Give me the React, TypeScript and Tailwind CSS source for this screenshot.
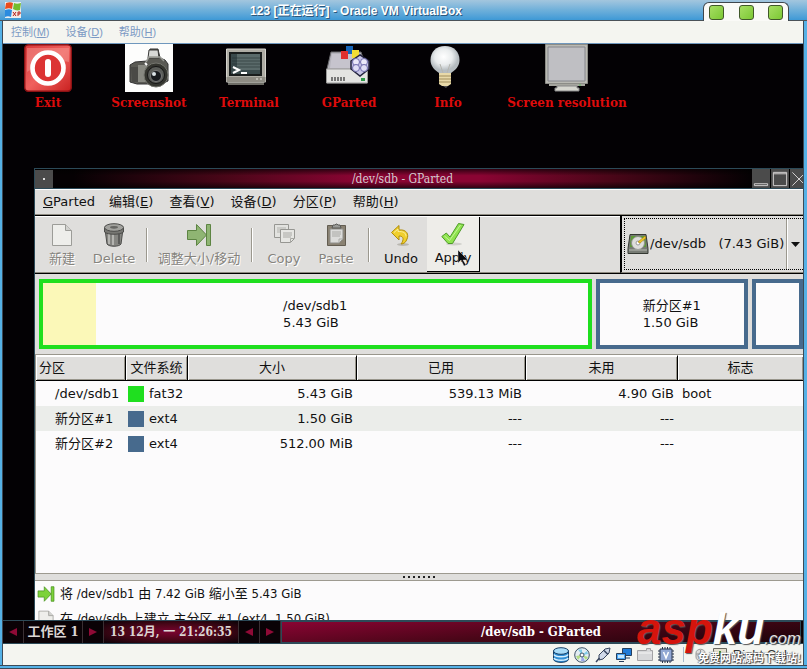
import type { ReactNode } from "react";

type Partition = {
  name: string;
  fs: string;
  swatch: string;
  border: string;
  gib: number;
  usedShare: number;
  size: string;
  used: string;
  unused: string;
  flags: string;
};

const partitions: Partition[] = [
  {
    name: "/dev/sdb1",
    fs: "fat32",
    swatch: "bg-[#1fdf1f]",
    border: "border-[#1fdf1f]",
    gib: 5.43,
    usedShare: 9.7,
    size: "5.43 GiB",
    used: "539.13 MiB",
    unused: "4.90 GiB",
    flags: "boot",
  },
  {
    name: "新分区#1",
    fs: "ext4",
    swatch: "bg-[#476a8d]",
    border: "border-[#476a8d]",
    gib: 1.5,
    usedShare: 0,
    size: "1.50 GiB",
    used: "---",
    unused: "---",
    flags: "",
  },
  {
    name: "新分区#2",
    fs: "ext4",
    swatch: "bg-[#476a8d]",
    border: "border-[#476a8d]",
    gib: 0.5,
    usedShare: 0,
    size: "512.00 MiB",
    used: "---",
    unused: "---",
    flags: "",
  },
];

const hostMenus = [
  { label: "控制", accessKey: "M" },
  { label: "设备", accessKey: "D" },
  { label: "帮助", accessKey: "H" },
];

const appMenus = [
  { label: "编辑", accessKey: "E" },
  { label: "查看", accessKey: "V" },
  { label: "设备", accessKey: "D" },
  { label: "分区", accessKey: "P" },
  { label: "帮助", accessKey: "H" },
];

const launchers = [
  { label: "Exit", icon: <ExitIcon />, width: "w-[90px]" },
  { label: "Screenshot", icon: <CameraIcon />, width: "w-[112px]" },
  { label: "Terminal", icon: <TerminalIcon />, width: "w-[88px]" },
  { label: "GParted", icon: <GPartedIcon />, width: "w-[112px]" },
  { label: "Info", icon: <BulbIcon />, width: "w-[86px]" },
  { label: "Screen resolution", icon: <MonitorIcon />, width: "w-[152px]" },
];

export default function App() {
  return (
    <div className="relative flex h-screen flex-col overflow-hidden bg-[#55b1e6] font-['DejaVu_Sans','Noto_Sans_CJK_SC',sans-serif] text-[13px] leading-4 text-[#111]">
      <HostTitleBar />
      <div className="ml-[2px] mr-[3px] flex min-h-0 flex-1 flex-col border-x border-[#3c4a57]">
        <HostMenuBar />
        <main className="flex min-h-0 flex-1 flex-col bg-[#030104]">
          <Launchers />
          <GPartedWindow />
          <Taskbar />
        </main>
        <StatusTray />
      </div>
      <div className="h-[4px] border-y border-[#3c4a57] bg-[#55b1e6]" />
      <Watermark />
    </div>
  );
}

function HostTitleBar() {
  return (
    <header className="flex h-[21px] shrink-0 items-end border-b border-[#4a5258] bg-linear-to-b from-[#a3c6de] via-[#6fb0da] to-[#3d99d6] pl-[5px] pr-[18px]">
      <div className="pb-[2px]">
        <XpIcon />
      </div>
      <h1 className="flex-1 pr-3 text-center font-['Liberation_Sans','Noto_Sans_CJK_SC',sans-serif] text-[12px] font-bold leading-[17px] text-white [text-shadow:1px_1px_0_#2b587d]">
        123 [正在运行] - Oracle VM VirtualBox
      </h1>
      <div className="-mb-px flex h-[19px] w-[86px] items-center justify-between rounded-t-md border border-b-0 border-[#3f474d] bg-[#fafaf7] px-[5px]">
        {["最小化", "最大化", "关闭"].map((label) => (
          <button
            key={label}
            type="button"
            aria-label={label}
            className="size-[15px] rounded-[3px] border border-[#41582a] bg-linear-to-br from-[#a6de62] to-[#7cc832]"
          />
        ))}
      </div>
    </header>
  );
}

function HostMenuBar() {
  return (
    <nav className="flex h-[23px] shrink-0 items-center gap-4 border-b border-[#6f97bd] bg-[#f4f5f0] pl-2 font-['Liberation_Sans','Noto_Sans_CJK_SC',sans-serif] text-[11px] text-[#7c9ac4]">
      {hostMenus.map((menu) => (
        <button key={menu.label} type="button">
          {menu.label}(<span className="underline">{menu.accessKey}</span>)
        </button>
      ))}
    </nav>
  );
}

function Launchers() {
  return (
    <div className="flex h-[124px] shrink-0 items-start">
      {launchers.map((launcher) => (
        <button
          key={launcher.label}
          type="button"
          className={`flex shrink-0 flex-col items-center whitespace-nowrap font-['DejaVu_Serif',serif] text-[12px] font-bold text-[#dd0b0b] ${launcher.width}`}
        >
          <span className="flex h-[51px] items-start">{launcher.icon}</span>
          {launcher.label}
        </button>
      ))}
    </div>
  );
}

function GPartedWindow() {
  return (
    <section className="ml-[31px] flex min-h-0 flex-1 flex-col overflow-hidden border-l border-[#2c4a58] bg-[#dfdedc]">
      <div className="flex h-[21px] shrink-0 items-center border-y border-[#2c4a58] bg-[linear-gradient(to_bottom,rgba(0,0,0,0.65),transparent_35%,transparent_65%,rgba(0,0,0,0.65)),linear-gradient(to_right,#050103_5%,#4a0618_25%,#8a0433_42%,#8a0433_58%,#4a0618_75%,#050103_93%)]">
        <button type="button" aria-label="窗口菜单" className="flex size-[18px] items-center justify-center bg-[#4b4b4b]">
          <span className="size-[2px] bg-[#ddd]" />
        </button>
        <h2 className="flex-1 text-center font-['DejaVu_Serif_Condensed','DejaVu_Serif',serif] text-[12px] text-[#d4ccd0]">
          /dev/sdb - GParted
        </h2>
        <WindowButton label="最小化">
          <path d="M2.500 14.500h14v2h-14z" />
        </WindowButton>
        <WindowButton label="最大化">
          <path d="M2.500 2.500h14v14h-14zM2.500 4h14" />
        </WindowButton>
        <div className="w-[13px] overflow-hidden">
          <WindowButton label="关闭">
            <path d="M2.500 2.500l14 14M16.500 2.500l-14 14" />
          </WindowButton>
        </div>
      </div>

      <nav className="flex h-[26px] shrink-0 items-center border-b border-t border-[#8d8a80] border-t-white">
        <button type="button" className="pl-2 pr-[6px]">
          <span className="underline">G</span>Parted
        </button>
        {appMenus.map((menu) => (
          <button key={menu.label} type="button" className="px-2">
            {menu.label}(<span className="underline">{menu.accessKey}</span>)
          </button>
        ))}
      </nav>

      <Toolbar />
      <DiskMap />
      <PartitionTable />

      <div className="flex h-[8px] shrink-0 items-center justify-center gap-[3px] border-y border-[#9d9a90]">
        {Array.from({ length: 7 }, (_, i) => (
          <span key={i} className="size-[2px] bg-[#222]" />
        ))}
      </div>

      <ul className="h-[39px] shrink-0 overflow-hidden bg-[#fcfbfc] font-['DejaVu_Sans_Condensed','DejaVu_Sans','Noto_Sans_CJK_SC',sans-serif]">
        <li className="flex h-[25px] items-center gap-[5px] pl-[2px]">
          <ResizeIcon size={18} />
          将 /dev/sdb1 由 7.42 GiB 缩小至 5.43 GiB
        </li>
        <li className="flex h-[25px] items-center gap-[5px] pl-[2px]">
          <PageIcon size={18} />
          在 /dev/sdb 上建立 主分区 #1 (ext4, 1.50 GiB)
        </li>
      </ul>
    </section>
  );
}

function WindowButton({ label, children }: { label: string; children: ReactNode }) {
  return (
    <button type="button" aria-label={label} className="block size-[19px] shrink-0 border-r border-black bg-[#4b4b4b]">
      <svg viewBox="0 0 19 19" className="size-[18px]" fill="none" stroke="#d9d6d6" strokeWidth="1">
        {children}
      </svg>
    </button>
  );
}

function Toolbar() {
  return (
    <div className="flex h-[59px] shrink-0 border-y border-black">
      <div className="flex flex-1 border-b border-t border-[#8d8a80] border-t-white pl-px">
        <ToolButton label="新建" icon={<PageIcon size={24} />} disabled />
        <ToolButton label="Delete" icon={<TrashIcon />} disabled />
        <ToolSeparator />
        <ToolButton label="调整大小/移动" icon={<ResizeIcon size={26} muted />} disabled wide />
        <ToolSeparator />
        <ToolButton label="Copy" icon={<CopyIcon />} disabled />
        <ToolButton label="Paste" icon={<PasteIcon />} disabled />
        <ToolSeparator />
        <ToolButton label="Undo" icon={<UndoIcon />} />
        <div className="relative border-b border-r border-black bg-[#eeede9]">
          <ToolButton label="Apply" icon={<ApplyIcon />} />
          <svg viewBox="0 0 12 18" className="absolute left-[30px] top-[33px] w-3">
            <path d="M1 0v13l3-3 3 6 2-1-3-5h5z" fill="#0a0a0f" stroke="#eee" strokeWidth=".4" />
          </svg>
        </div>
      </div>
      <div className="flex w-[183px] border-b border-l-2 border-[#8d8a80] border-l-black py-[2px] pl-[2px]">
        <div className="flex flex-1 items-center border border-r-0 border-dotted border-black">
          <span className="ml-[2px] shrink-0">
            <DiskIcon />
          </span>
          <select
            aria-label="设备"
            className="min-w-0 flex-1 appearance-none whitespace-nowrap bg-transparent pl-px outline-none"
          >
            <option>{"/dev/sdb\u00a0\u00a0\u00a0(7.43 GiB)"}</option>
          </select>
          <span className="h-full w-[2px] border-l border-r border-[#9b988e] border-r-white" />
          <svg viewBox="0 0 9 5" className="mx-[3px] w-[9px]">
            <path d="M0 0h9l-4.500 5z" fill="#111" />
          </svg>
        </div>
      </div>
    </div>
  );
}

function ToolButton({
  label,
  icon,
  disabled,
  wide,
}: {
  label: string;
  icon: ReactNode;
  disabled?: boolean;
  wide?: boolean;
}) {
  return (
    <button
      type="button"
      disabled={disabled}
      className={`flex h-full flex-col items-center justify-center gap-1 whitespace-nowrap disabled:text-[#86847e] disabled:[text-shadow:1px_1px_0_#fff] ${
        wide ? "w-[92px]" : "w-[52px]"
      }`}
    >
      <span className="flex h-6 items-center">{icon}</span>
      {label}
    </button>
  );
}

function ToolSeparator() {
  return <span className="ml-[6px] mr-[5px] h-[34px] w-[2px] self-center border-l border-r border-[#9b988e] border-r-white" />;
}

function DiskMap() {
  return (
    <div className="flex h-[80px] shrink-0 gap-1 py-[5px] pl-1">
      {partitions.map((partition) => (
        <div key={partition.name} className="flex min-w-0 basis-0" style={{ flexGrow: partition.gib }}>
          <div
            className={`relative flex min-w-0 flex-1 items-center justify-center overflow-hidden border-4 bg-[#fcfbfc] ${partition.border}`}
          >
            {partition.usedShare > 0 && (
              <span className="absolute inset-y-0 left-0 bg-[#fbf8b8]" style={{ width: `${partition.usedShare}%` }} />
            )}
            {partition.gib > 1 && (
              <p className="leading-[17px]">
                {partition.name}
                <br />
                {partition.size}
              </p>
            )}
          </div>
        </div>
      ))}
    </div>
  );
}

const headCell =
  "border-b border-t border-black border-t-white bg-[#dfdedc] p-0 font-normal shadow-[inset_1px_1px_0_#fff,inset_-1px_-1px_0_#99968c]";

function PartitionTable() {
  return (
    <div className="min-h-0 flex-1 overflow-hidden border-l border-t border-[#99968c] bg-[#fcfbfc]">
      <table className="w-full table-fixed border-separate border-spacing-0">
        <thead>
          <tr className="h-[26px]">
            <th className={`${headCell} w-[90px] border-r pl-[3px] text-left`}>分区</th>
            <th className={`${headCell} w-[62px] border-r`}>文件系统</th>
            <th className={`${headCell} w-[169px] border-r`}>大小</th>
            <th className={`${headCell} w-[169px] border-r`}>已用</th>
            <th className={`${headCell} w-[152px] border-r`}>未用</th>
            <th className={headCell}>标志</th>
          </tr>
        </thead>
        <tbody>
          {partitions.map((partition) => (
            <tr key={partition.name} className="h-[25px] even:bg-[#ebedea]">
              <td className="whitespace-nowrap p-0 pl-[19px]">{partition.name}</td>
              <td className="p-0">
                <span className="flex items-center gap-[5px] pl-[2px]">
                  <span className={`size-4 shrink-0 ${partition.swatch}`} />
                  {partition.fs}
                </span>
              </td>
              <td className="p-0 pr-1 text-right">{partition.size}</td>
              <td className="p-0 pr-1 text-right">{partition.used}</td>
              <td className="p-0 pr-1 text-right">{partition.unused}</td>
              <td className="p-0 pl-1">{partition.flags}</td>
            </tr>
          ))}
        </tbody>
      </table>
    </div>
  );
}

function Taskbar() {
  return (
    <footer className="flex h-6 shrink-0 items-stretch border-y border-[#2c4a58] bg-[#0a0206] font-['DejaVu_Serif_Condensed','Noto_Sans_CJK_SC',serif] text-[12px] font-bold text-[#dcd6d4]">
      <ArrowButton label="上一个工作区" direction="left" />
      <span className="flex w-[59px] items-center justify-center whitespace-nowrap border-r border-[#3a2f33] text-[13px]">
        工作区 1
      </span>
      <ArrowButton label="下一个工作区" direction="right" />
      <time className="flex w-[135px] items-center justify-center whitespace-nowrap border-r border-[#3a2f33] bg-[radial-gradient(ellipse_at_center,#7a0430,#4a0618_50%,#0a0206_100%)]">
        13 12月, 一 21:26:35
      </time>
      <ArrowButton label="上一个窗口" direction="left" />
      <ArrowButton label="下一个窗口" direction="right" />
      <button
        type="button"
        className="mr-[2px] flex-1 border border-[#2c4a58] bg-[linear-gradient(175deg,#8a0433,#4a0618_50%,#1c0309)] text-[13px] text-white"
      >
        /dev/sdb - GParted
      </button>
    </footer>
  );
}

function ArrowButton({ label, direction }: { label: string; direction: "left" | "right" }) {
  return (
    <button type="button" aria-label={label} className="flex w-[21px] items-center justify-center border-r border-[#3a2f33]">
      <svg viewBox="0 0 8 8" className="w-2">
        <path d={direction === "left" ? "M8 0v8L0 4z" : "M0 0v8l8-4z"} fill="#8f0a36" />
      </svg>
    </button>
  );
}

function StatusTray() {
  return (
    <div className="flex h-[21px] shrink-0 items-center justify-end gap-[3px] bg-[#f4f5f0] pr-4">
      <TrayIcon>
        <path d="M.5 4v8c0 4.500 15 4.500 15 0V4z" fill="#2f8fd6" stroke="#173f66" />
        <path d="M1 7.500c1 3 13 3 14 0M1 11c1 3 13 3 14 0" fill="none" stroke="#d5efff" strokeWidth="1.500" />
        <ellipse cx="8" cy="4" rx="7.500" ry="3.300" fill="#a9dcf8" stroke="#173f66" />
      </TrayIcon>
      <TrayIcon>
        <circle cx="8" cy="8" r="7.300" fill="#e3edf3" stroke="#3c5266" />
        <path d="M8 8L4 2.500h4zM8 8l5-4 1 3z" fill="#7fcbe8" />
        <path d="M8 8l-6 1 2 4zM8 8l4 5 2-3z" fill="#b3dc86" />
        <path d="M8 8l-1 6h4z" fill="#9aa7e8" />
        <circle cx="8" cy="8" r="2" fill="#fff" stroke="#3c5266" />
      </TrayIcon>
      <TrayIcon>
        <path d="M4 8l6-6 5-1-1 5-6 6-4 1z" fill="#d0d9e8" stroke="#37445d" />
        <path d="M4.500 11L1 15M9 3.500l4 4" stroke="#37445d" strokeWidth="1.500" fill="none" />
      </TrayIcon>
      <TrayIcon>
        <path d="M6.500 1.500h9v7h-9zM9 11h5" fill="#1f7bd8" stroke="#263f5c" />
        <path d="M.5 6.500h9v6h-9zM3 14.500h5" fill="#49a5f5" stroke="#263f5c" />
        <path d="M2 8h6v3H2z" fill="#c2e7ff" />
      </TrayIcon>
      <TrayIcon>
        <path d="M.5 3.500h9v-2h4v2h2v10H.5z" fill="#d7d8da" stroke="#a2a2a4" />
        <path d="M1 6h14" stroke="#f5f5f5" />
      </TrayIcon>
      <TrayIcon>
        <path d="M4.500 0v16M7 0v16M9.500 0v16M12 0v16M0 4h16M0 7h16M0 10h16M0 13h16" stroke="#29364f" />
        <path d="M2 2h12v12H2z" fill="#92a8d4" stroke="#29364f" />
        <path d="M5.500 5L8 11l2.500-6" fill="none" stroke="#fff" strokeWidth="1.500" />
      </TrayIcon>
      <span className="mx-1 h-[15px] w-px bg-[#a6b9c9]" />
      <TrayIcon>
        <path d="M5 6c0-5 9-5 9 0v4c0 5-9 5-9 0z" fill="#dedede" stroke="#999" />
        <path d="M9.500 3v4M5 7h9" stroke="#999" />
      </TrayIcon>
      <TrayIcon>
        <path d="M1.500 1.500h13v13h-13z" fill="#e4e0cf" stroke="#6b6a63" />
        <path d="M8 4v7M5 8l3 3 3-3" stroke="#3c8b34" strokeWidth="2" fill="none" />
      </TrayIcon>
      <span className="font-['Liberation_Sans',sans-serif] text-[13px] text-[#333]">Right Ctrl</span>
    </div>
  );
}

function TrayIcon({ children }: { children: ReactNode }) {
  return (
    <svg viewBox="0 0 16 16" className="mr-[2px] size-4 shrink-0">
      {children}
    </svg>
  );
}

function Watermark() {
  return (
    <div className="pointer-events-none absolute bottom-0 right-[6px] flex flex-col items-end">
      <p className="flex items-baseline font-['Liberation_Sans',sans-serif] text-[44px] font-bold italic leading-[44px] [text-shadow:1px_1px_1px_#555]">
        <span className="text-[#d4140c]">asp</span>
        <span className="text-white">ku</span>
        <span className="text-[17px] font-normal text-[#e4e2e2]">.com</span>
      </p>
      <p className="-mt-3 pb-1 font-['Noto_Sans_CJK_SC',sans-serif] text-[11px] font-bold text-white [text-shadow:1px_1px_1px_#333,-1px_0_1px_#777]">
        免费网站源码下载站!
      </p>
    </div>
  );
}

function XpIcon() {
  return (
    <svg viewBox="0 0 16 16" className="size-4">
      <path d="M0 0h16v16H0z" fill="#e8eef2" />
      <path d="M1 1c3-1 5-1 7 0L7 7C5 6 3 6 0 7z" fill="#ea4b1c" />
      <path d="M9 1c2 1 4 1 7 0l-1 7c-3 1-5 0-7-1z" fill="#74bd2d" />
      <path d="M0 8c3-1 5-1 7 0l-1 7c-2-1-4-1-6 0z" fill="#2a8be0" />
      <path d="M7 9h9v6H7z" fill="#f4e9e4" />
      <path d="M8 10l3 4M11 10l-3 4M13 14v-4h2v2h-2" fill="none" stroke="#b3201a" />
    </svg>
  );
}

function ExitIcon() {
  return (
    <svg viewBox="0 0 48 48" className="size-12">
      <defs>
        <linearGradient id="exit" x2="1" y2="1">
          <stop offset="0" stopColor="#d9383a" />
          <stop offset=".5" stopColor="#f0605e" />
          <stop offset="1" stopColor="#c9201f" />
        </linearGradient>
      </defs>
      <rect x=".7" y=".7" width="46.600" height="46.600" rx="4" fill="url(#exit)" stroke="#8c1214" strokeWidth="1.500" />
      <path d="M3 4h42v14C30 14 16 20 3 28z" fill="#f59c96" opacity=".5" />
      <circle cx="24" cy="24" r="15.500" fill="#dc3434" stroke="#fff" strokeWidth="4.600" />
      <rect x="21" y="15" width="6" height="18" rx="3" fill="#fff" />
    </svg>
  );
}

function CameraIcon() {
  return (
    <svg viewBox="0 0 48 48" className="size-12">
      <path d="M0 0h48v48H0z" fill="#fdfdfc" />
      <path d="M5 21l5-3 12-1 2-4 1-8h8l2 9 5 2 3 4v17l-7 3H12l-7-2z" fill="#5a5a54" stroke="#333" />
      <path d="M24 6h9l1 8h-11z" fill="#d8d9d6" stroke="#3a3a38" />
      <path d="M21 18l3-5h11l4 4" fill="none" stroke="#999a94" strokeWidth="1.500" />
      <path d="M6 23h11v15H7z" fill="#4a4a46" />
      <path d="M13 21h9v17h-9z" fill="#888981" />
      <circle cx="31" cy="31" r="12" fill="#34352f" stroke="#74756e" />
      <circle cx="31" cy="31" r="8.500" fill="#5a5c58" stroke="#151515" />
      <circle cx="31" cy="32" r="5.500" fill="#181b1f" stroke="#777" />
      <circle cx="29" cy="30" r="2" fill="#dce4e8" />
      <path d="M20 19l2 2" stroke="#fff" strokeWidth="2" />
    </svg>
  );
}

function TerminalIcon() {
  return (
    <svg viewBox="0 0 48 48" className="size-12">
      <path d="M3 38h36v3H3z" fill="#6d6c66" />
      <path d="M1.500 5h39v33h-39z" fill="#aeaca4" stroke="#d4d3cd" />
      <path d="M1.500 33h39v5h-39z" fill="#8e8c84" />
      <path d="M5 9h31v22H5z" fill="#39494b" stroke="#191d1d" strokeWidth="2" />
      <path d="M12 10h23v16H12z" fill="#71817e" opacity=".6" />
      <path d="M7 14h28M7 17h28M7 20h28M7 23h28" stroke="#263233" opacity=".6" />
      <path d="M8 23l6 3-6 3M16 29h6" fill="none" stroke="#fff" strokeWidth="2" />
      <path d="M31 35h2M35 35h2" stroke="#e8e6de" />
    </svg>
  );
}

function GPartedIcon() {
  return (
    <svg viewBox="0 0 48 48" className="size-12">
      <path d="M6 8h30l6 18v13H2V25z" fill="#b5b4bc" stroke="#6a6a6d" />
      <path d="M7 10h28l4 14H5z" fill="#c6c4cd" />
      <path d="M1.500 25h41v14h-41z" fill="#e4e4e2" stroke="#9a9a99" />
      <path d="M6 34h14M6 36h14" stroke="#777" strokeWidth="2" strokeDasharray="2 1" />
      <path d="M36 34h4v3h-4z" fill="#2e9a4a" />
      <path d="M21 2h7v8h-7z" fill="#1565b8" />
      <path d="M16 7h7v8h-7z" fill="#e0302d" />
      <path d="M27 6h7v8h-7z" fill="#f2dd34" />
      <path d="M26 17l9-6 9 6v8l-9 7-9-7z" fill="#c7c5e6" stroke="#23233d" strokeWidth="1.500" />
      <circle cx="31" cy="18" r="3.500" fill="#ebe9fa" stroke="#706cae" />
      <circle cx="39" cy="18" r="3.500" fill="#ebe9fa" stroke="#706cae" />
      <circle cx="31" cy="24" r="3.500" fill="#e0def6" stroke="#706cae" />
      <circle cx="39" cy="24" r="3.500" fill="#e0def6" stroke="#706cae" />
    </svg>
  );
}

function BulbIcon() {
  return (
    <svg viewBox="0 0 48 48" className="size-12">
      <defs>
        <radialGradient id="bulb" cx=".45" cy=".4">
          <stop offset="0" stopColor="#ffffff" />
          <stop offset=".6" stopColor="#e9eced" />
          <stop offset="1" stopColor="#b5bcc0" />
        </radialGradient>
      </defs>
      <path d="M21 2C12 2 6.500 8 6.500 16c0 6 4 10 8.500 13h12c4.500-3 8.500-7 8.500-13C35.500 8 30 2 21 2z" fill="url(#bulb)" />
      <path d="M19 29l-3-9M23 29l3-9" fill="none" stroke="#b5b5af" />
      <path d="M15 29h12v11l-3 2h-6l-3-2z" fill="#e8d9a8" />
      <path d="M15 32h12M15 35h12M15 38h12" stroke="#a08d5c" />
      <path d="M19 42h5l-2 2z" fill="#555" />
    </svg>
  );
}

function MonitorIcon() {
  return (
    <svg viewBox="0 0 48 48" className="size-12">
      <path d="M2.500.5h42v39h-42z" fill="#b9b9b3" stroke="#8c8c87" />
      <path d="M5 3h37v34H5z" fill="#bfbfc3" stroke="#85868c" />
      <path d="M6 40h36v2H6z" fill="#a6a69f" />
      <path d="M14 42h20v2h2v3H12v-3h2z" fill="#d6d6cf" stroke="#888" />
      <path d="M36 41h2" stroke="#5abf5a" />
    </svg>
  );
}

function PageIcon({ size }: { size: number }) {
  return (
    <svg viewBox="0 0 24 24" width={size} height={size}>
      <path d="M2.500 1.500h13l6 6v15h-19z" fill="#eeeeeb" stroke="#9c9c98" />
      <path d="M15.500 1.500v6h6" fill="#d2d2cf" stroke="#9c9c98" />
    </svg>
  );
}

function TrashIcon() {
  return (
    <svg viewBox="0 0 24 24" className="size-6">
      <path d="M3 6l2 15c2 3 12 3 14 0l2-15z" fill="#858581" stroke="#4c4c4a" />
      <path d="M7 10v11M11 11v11" stroke="#b4b4b0" strokeWidth="2" />
      <path d="M17 10v11" stroke="#5c5c5a" strokeWidth="2" />
      <path d="M2.500 5v4c3 3 16 3 19 0V5z" fill="#777773" stroke="#4c4c4a" />
      <ellipse cx="12" cy="4.500" rx="9.500" ry="3.800" fill="#a2a29e" stroke="#4c4c4a" />
      <ellipse cx="12" cy="4.300" rx="4" ry="1.400" fill="#666663" />
    </svg>
  );
}

function ResizeIcon({ size, muted }: { size: number; muted?: boolean }) {
  const fill = muted ? "#8fb573" : "#7cd23a";
  const stroke = muted ? "#5d8443" : "#3f8a16";

  return (
    <svg viewBox="0 0 26 26" width={size} height={size} fill={fill} stroke={stroke}>
      <path d="M1.500 8.500h9v-6l10 10.500-10 10.500v-6h-9z" />
      <path d="M20.500 2.500h4v21h-4z" />
    </svg>
  );
}

function CopyIcon() {
  return (
    <svg viewBox="0 0 24 24" className="size-6">
      <path d="M2.500 1.500h14v13h-14z" fill="#e2e2df" stroke="#969692" />
      <path d="M5 5h9M5 7h9M5 9h3" stroke="#b3b3af" />
      <path d="M8.500 6.500h14v9l-4 4h-10z" fill="#e6e6e3" stroke="#969692" />
      <path d="M11 10h9M11 12h9M11 14h8M18.500 19.500v-4h4" fill="none" stroke="#a8a8a4" />
    </svg>
  );
}

function PasteIcon() {
  return (
    <svg viewBox="0 0 24 24" className="size-6">
      <path d="M3.500 2.500h18v20h-18z" fill="#8a8273" stroke="#635d51" />
      <path d="M6 6h13v10l-4 4H6z" fill="#dcdcda" stroke="#8f8f8b" />
      <path d="M15 20v-4h4M8 9h9M8 11h9M8 13h8" fill="none" stroke="#aaaaa6" />
      <path d="M8 5l1-3h2l1-1h1l1 1h2l1 3z" fill="#999a96" stroke="#5a5a57" />
    </svg>
  );
}

function UndoIcon() {
  return (
    <svg viewBox="0 0 24 24" className="size-6">
      <ellipse cx="14" cy="21.500" rx="6" ry="1.500" fill="#b9b7b0" />
      <path d="M2.500 9.500L10 2.500V7c8-1 10 5 8 9-1 3-3 5-6 5 3-4 3-8-2-8v4z" fill="#f0cf2c" stroke="#b08d0c" />
      <path d="M5 9.500l4-3.500v2.500c5 0 8 1 8 5" fill="none" stroke="#fbee9a" />
    </svg>
  );
}

function ApplyIcon() {
  return (
    <svg viewBox="0 0 24 24" className="size-6">
      <ellipse cx="13" cy="22" rx="8" ry="1.500" fill="#d0cfca" />
      <path d="M.8 14.500l4.500-3.500 3.700 4L17.500 1.500l5.500 1L11.500 21.500H7z" fill="#8fe34e" stroke="#4d9a2a" />
      <path d="M3.500 14l5 4.500L19.500 3" fill="none" stroke="#c4f59b" />
    </svg>
  );
}

function DiskIcon() {
  return (
    <svg viewBox="0 0 22 22" className="w-[22px]">
      <path d="M3 1.500h16l2 14v5H1v-5z" fill="#777b74" stroke="#343832" />
      <path d="M4 3h14l1 11H3z" fill="#5d9b35" />
      <circle cx="11" cy="10" r="6.500" fill="#dededb" stroke="#8d8f8a" />
      <circle cx="11" cy="10" r="2" fill="#fff" stroke="#999" />
      <path d="M18 3l-7 6 2 1 6-5z" fill="#f0c624" stroke="#a47f0d" strokeWidth=".6" />
      <path d="M2 17h18" stroke="#b7bab2" />
    </svg>
  );
}
